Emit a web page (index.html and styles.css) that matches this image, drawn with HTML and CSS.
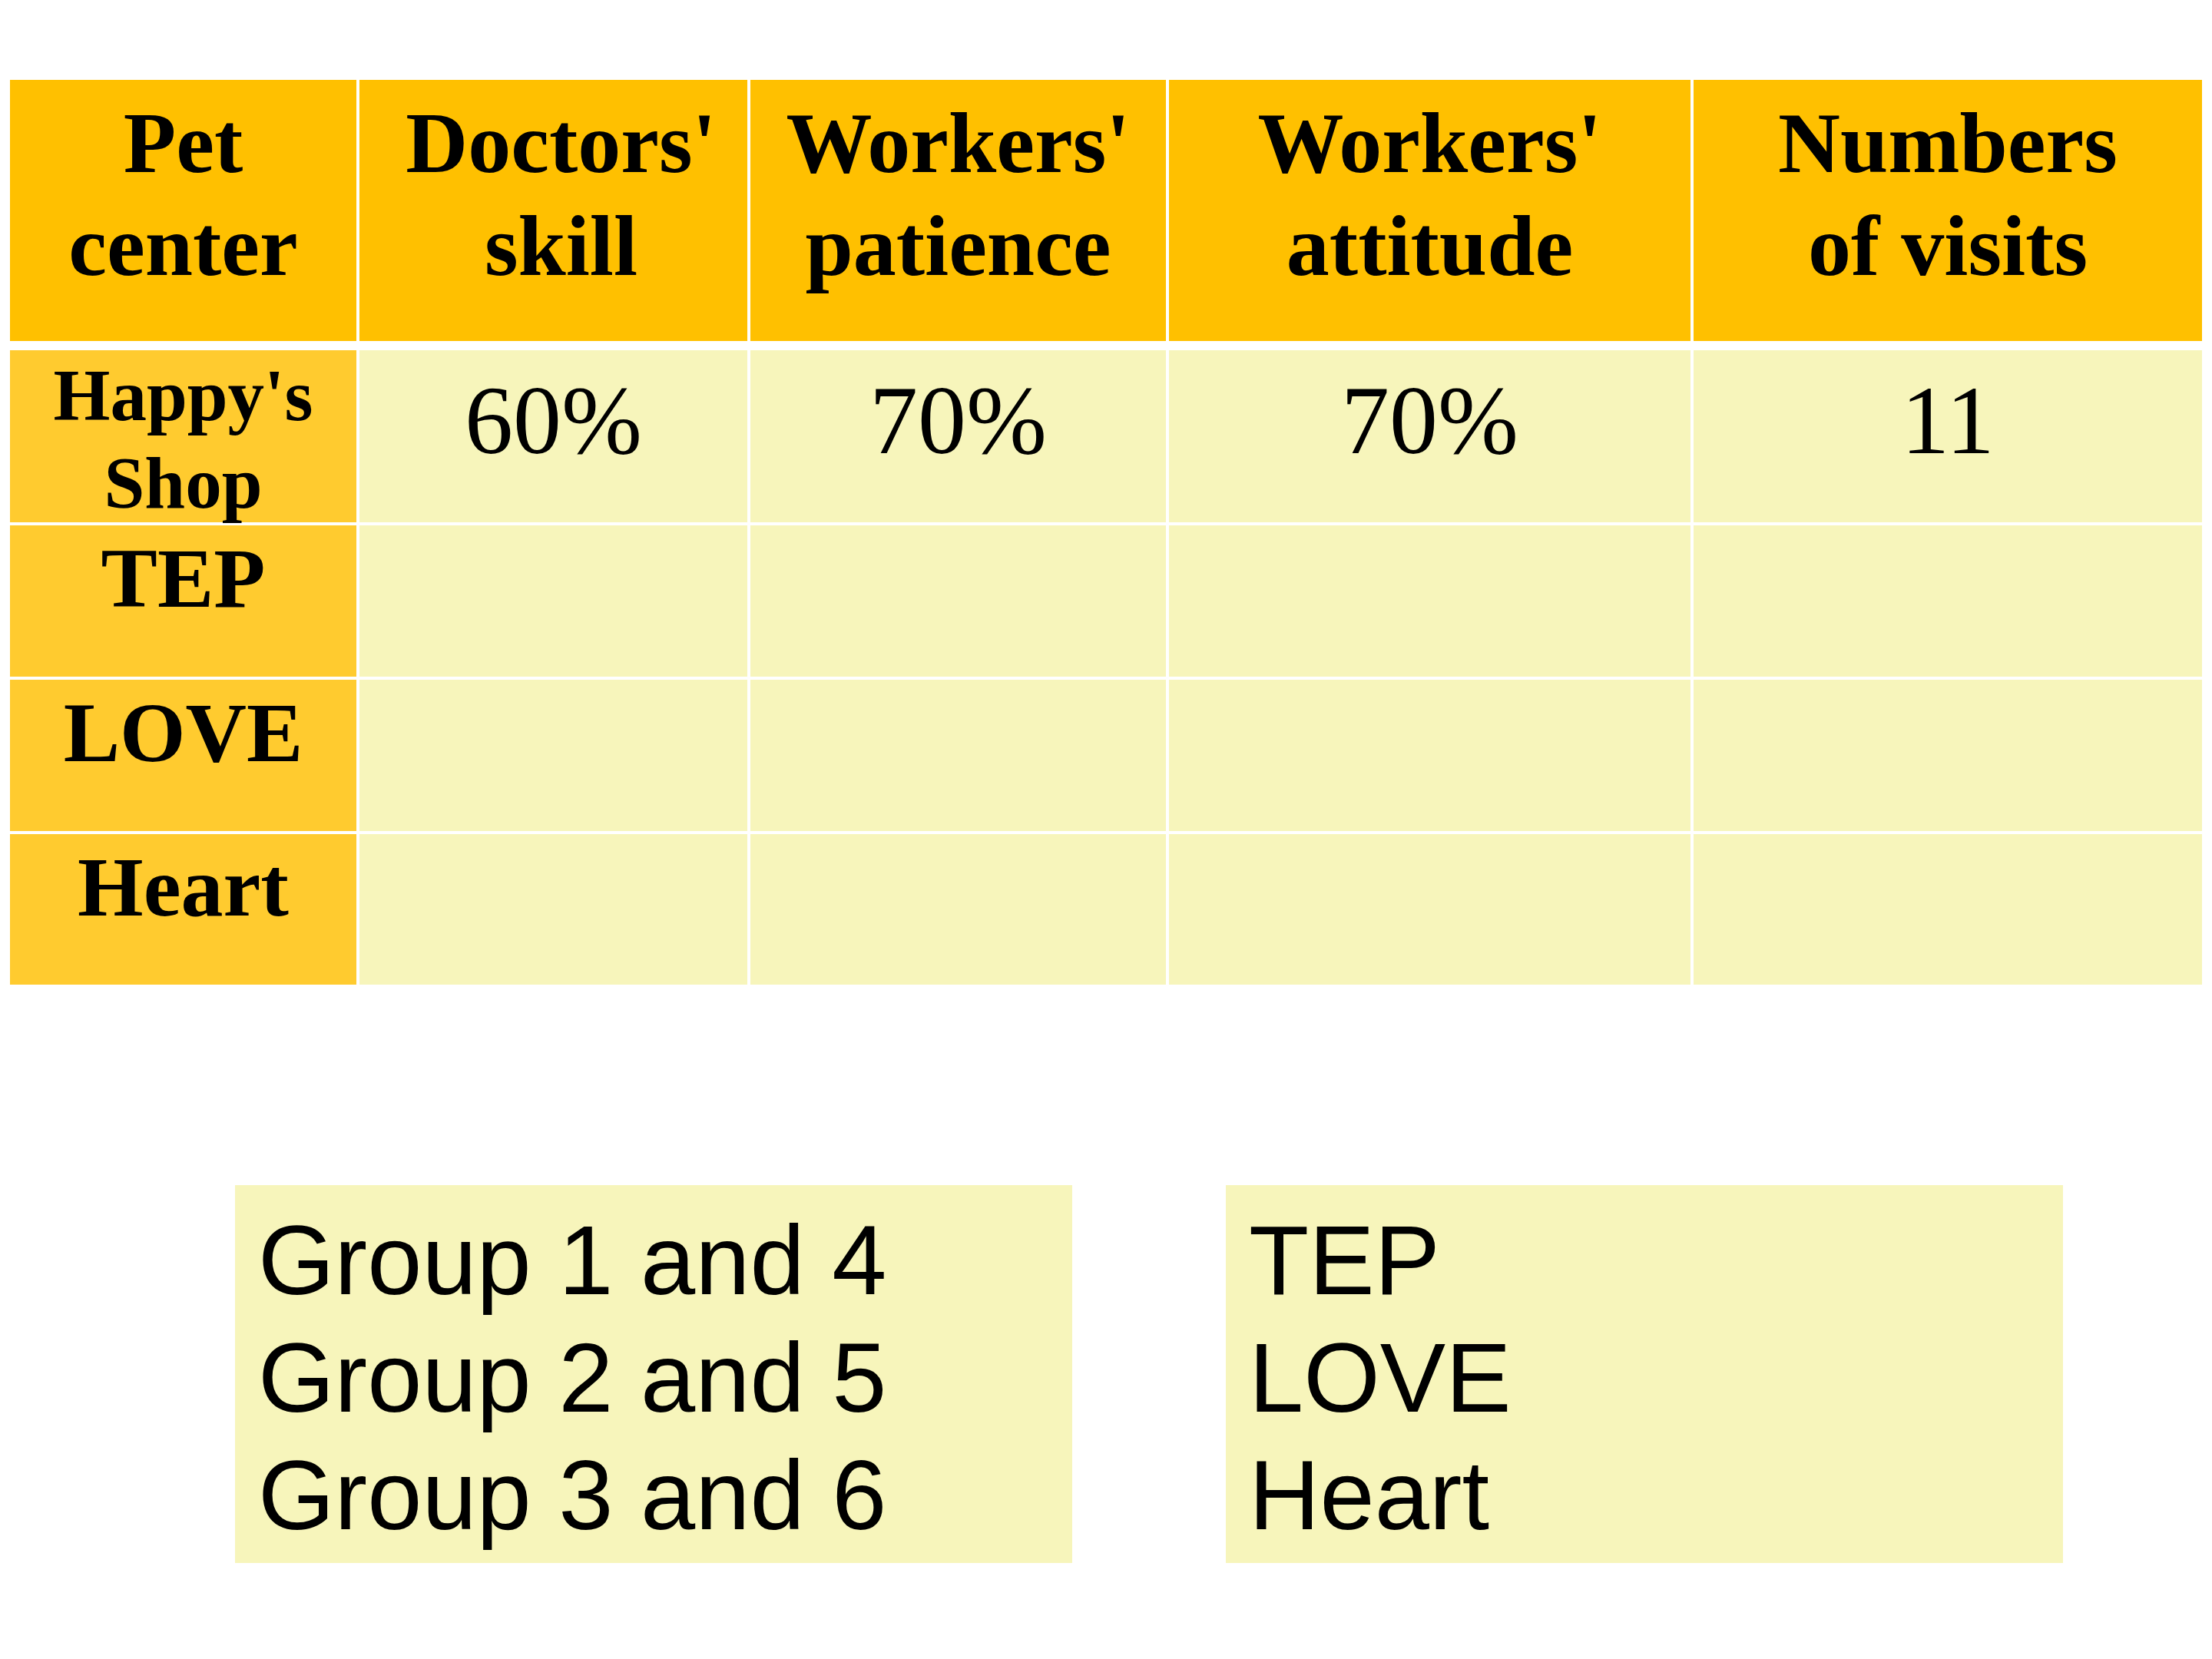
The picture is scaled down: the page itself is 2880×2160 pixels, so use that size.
FILE: index.html
```html
<!DOCTYPE html>
<html lang="en">
<head>
<meta charset="utf-8">
<title>Pet center comparison</title>
<link rel="stylesheet" href="styles.css">
</head>
<body>
<div class="slide">
  <div class="table">
    <div class="cell head">Pet<br>center</div>
    <div class="cell head shifted">Doctors'<br>skill</div>
    <div class="cell head">Workers'<br>patience</div>
    <div class="cell head">Workers'<br>attitude</div>
    <div class="cell head">Numbers<br>of visits</div>

    <div class="cell label small">Happy's<br>Shop</div>
    <div class="cell value">60%</div>
    <div class="cell value">70%</div>
    <div class="cell value">70%</div>
    <div class="cell value">11</div>

    <div class="cell label">TEP</div>
    <div class="cell body"></div>
    <div class="cell body"></div>
    <div class="cell body"></div>
    <div class="cell body"></div>

    <div class="cell label">LOVE</div>
    <div class="cell body"></div>
    <div class="cell body"></div>
    <div class="cell body"></div>
    <div class="cell body"></div>

    <div class="cell label">Heart</div>
    <div class="cell body"></div>
    <div class="cell body"></div>
    <div class="cell body"></div>
    <div class="cell body"></div>
  </div>

  <div class="boxes">
    <div class="box">Group 1 and 4<br>Group 2 and 5<br>Group 3 and 6</div>
    <div class="box">TEP<br>LOVE<br>Heart</div>
  </div>
</div>
</body>
</html>
```

FILE: styles.css
```css
html, body {
  margin: 0;
  padding: 0;
  background: #ffffff;
}

.slide {
  width: 2880px;
  height: 2160px;
  box-sizing: border-box;
  padding: 104px 13px 0 13px;
  background: #ffffff;
  color: #000000;
}

.table {
  display: grid;
  grid-template-columns: 451px 505px 541px 679px 662px;
  grid-template-rows: 348px 224px 197px 197px 196px;
  column-gap: 4px;
  row-gap: 4px;
  width: 2854px;
  font-family: "Liberation Serif", "Times New Roman", serif;
}

.cell {
  box-sizing: border-box;
  text-align: center;
  overflow: visible;
}

.head {
  align-self: start;
  height: 340px;
  background: #ffc000;
  font-weight: bold;
  font-size: 112px;
  line-height: 134px;
  padding-top: 15px;
}

.head.shifted {
  padding-left: 20px;
}

.label {
  background: #ffcb2f;
  font-weight: bold;
  font-size: 110px;
  line-height: 134px;
  padding-top: 2px;
}

.label.small {
  font-size: 95px;
  line-height: 114px;
  padding-top: 2px;
}

.body,
.value {
  background: #f7f5bb;
}

.value {
  font-size: 126px;
  line-height: 150px;
  padding-top: 17px;
}

.boxes {
  display: flex;
  gap: 200px;
  margin-top: 261px;
  padding-left: 293px;
}

.box {
  box-sizing: border-box;
  width: 1090px;
  height: 492px;
  background: #f7f5bb;
  padding: 21px 30px;
  font-family: "Liberation Sans", Arial, sans-serif;
  font-size: 128px;
  line-height: 153px;
}
```
